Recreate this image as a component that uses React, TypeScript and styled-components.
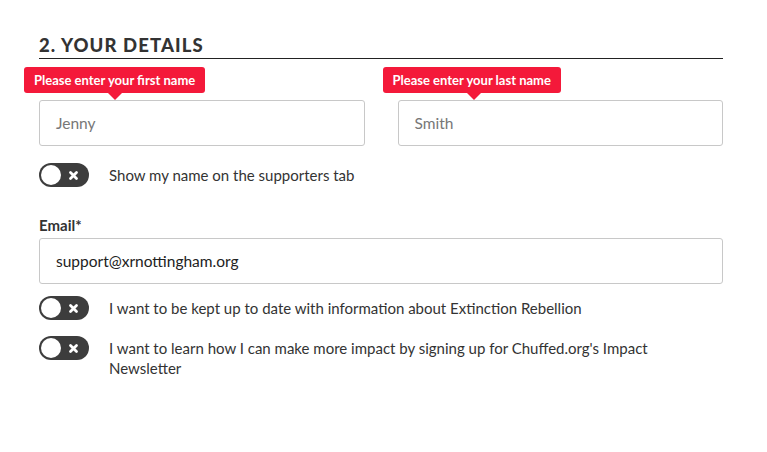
import React from "react";
import styled, { createGlobalStyle } from "styled-components";

const Global = createGlobalStyle`
  html, body { margin: 0; padding: 0; background: #fff; }
  body { font-family: "Lato", "Noto Sans", sans-serif; color: #333; }
  * { box-sizing: border-box; }
`;

const Page = styled.div`
  width: 767px;
  height: 452px;
  padding: 33px 44px 0 39px;
`;

const Heading = styled.h2`
  margin: 0;
  font-size: 18.5px;
  font-weight: 900;
  letter-spacing: 1.1px;
  line-height: 24px;
  color: #333;
  padding-bottom: 1px;
  border-bottom: 1px solid #222;
`;

const NameRow = styled.div`
  display: grid;
  grid-template-columns: 1fr 1fr;
  gap: 33px;
  margin-top: 18px;
`;

const Field = styled.div`
  position: relative;
  display: flex;
  flex-direction: column;
`;

const Label = styled.label<{ $error?: boolean }>`
  font-size: 15px;
  font-weight: 700;
  line-height: 20px;
  color: ${(p) => (p.$error ? "#8a0f1f" : "#333")};
  margin-bottom: 3px;
`;

const Input = styled.div<{ $placeholder?: boolean }>`
  height: 46px;
  border: 1px solid #c8c8c8;
  border-radius: 3px;
  padding: 0 16px;
  display: flex;
  align-items: center;
  font-size: 15.5px;
  color: ${(p) => (p.$placeholder ? "#777" : "#222")};
`;

const Tooltip = styled.div`
  position: absolute;
  left: -15px;
  top: -10px;
  background: #f4193a;
  color: #fff;
  font-size: 13px;
  font-weight: 700;
  line-height: 26px;
  padding: 0 10px;
  border-radius: 3px;
  white-space: nowrap;
  &::after {
    content: "";
    position: absolute;
    left: 83px;
    bottom: -7px;
    border-left: 8px solid transparent;
    border-right: 8px solid transparent;
    border-top: 8px solid #f4193a;
  }
`;

const ToggleRow = styled.div<{ $top: number }>`
  display: flex;
  align-items: flex-start;
  gap: 20px;
  margin-top: ${(p) => p.$top}px;
`;

const Track = styled.div`
  flex: 0 0 auto;
  width: 50px;
  height: 24px;
  border-radius: 12px;
  background: #3d3d3d;
  display: flex;
  align-items: center;
  padding: 0 2px;
  justify-content: space-between;
`;

const Knob = styled.div`
  width: 20px;
  height: 20px;
  border-radius: 50%;
  background: #fff;
`;

const Cross = styled.svg`
  width: 11px;
  height: 11px;
  margin-right: 8px;
`;

const ToggleText = styled.div`
  font-size: 15px;
  line-height: 20px;
  color: #333;
  padding-top: 2px;
`;

const EmailField = styled(Field)`
  margin-top: 28px;
`;

const Toggle = () => (
  <Track>
    <Knob />
    <Cross viewBox="0 0 11 11">
      <path d="M2.5 2.5 L8.5 8.5 M8.5 2.5 L2.5 8.5" stroke="#fff" strokeWidth="2.8" strokeLinecap="round" />
    </Cross>
  </Track>
);

export default function App() {
  return (
    <Page>
      <Global />
      <Heading>2. YOUR DETAILS</Heading>
      <NameRow>
        <Field>
          <Label $error>First Name*</Label>
          <Input $placeholder>Jenny</Input>
          <Tooltip>Please enter your first name</Tooltip>
        </Field>
        <Field>
          <Label $error>Last Name*</Label>
          <Input $placeholder>Smith</Input>
          <Tooltip>Please enter your last name</Tooltip>
        </Field>
      </NameRow>
      <ToggleRow $top={17}>
        <Toggle />
        <ToggleText>Show my name on the supporters tab</ToggleText>
      </ToggleRow>
      <EmailField>
        <Label>Email*</Label>
        <Input>support@xrnottingham.org</Input>
      </EmailField>
      <ToggleRow $top={12}>
        <Toggle />
        <ToggleText>I want to be kept up to date with information about Extinction Rebellion</ToggleText>
      </ToggleRow>
      <ToggleRow $top={16}>
        <Toggle />
        <ToggleText>
          I want to learn how I can make more impact by signing up for Chuffed.org's Impact
          <br />
          Newsletter
        </ToggleText>
      </ToggleRow>
    </Page>
  );
}
